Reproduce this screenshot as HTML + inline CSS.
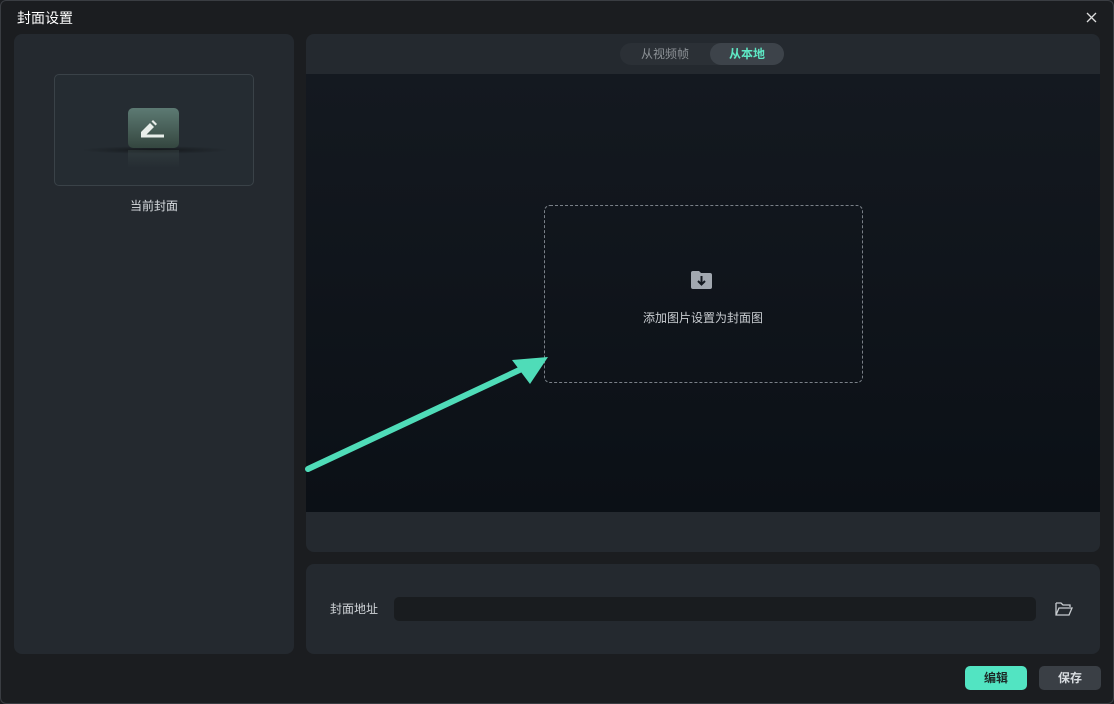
<!DOCTYPE html><html><head><meta charset="utf-8"><style>
*{margin:0;padding:0;box-sizing:border-box}
body{width:1114px;height:704px;background:#1b1d20;font-family:"Liberation Sans","Noto Sans CJK SC",sans-serif;position:relative;overflow:hidden}
.win{position:absolute;left:0;top:0;width:1114px;height:704px;border:1px solid #3a3d42;border-radius:6px;background:#1b1d20}
.a{position:absolute;line-height:1}
</style></head><body><div class="win"></div>
<div class="a" style="left:17px;top:11px;color:#fff;font-size:14px">封面设置</div>
<svg class="a" style="left:1086px;top:12px" width="11" height="11"><path d="M1 1 L10 10 M10 1 L1 10" stroke="#ddd" stroke-width="1.3"/></svg>
<div class="a" style="left:14px;top:34px;width:280px;height:620px;background:#24292f;border-radius:8px"></div>
<div class="a" style="left:54px;top:74px;width:200px;height:112px;background:#252c32;border:1px solid #3a4248;border-radius:5px"></div>
<div class="a" style="left:80px;top:146px;width:150px;height:8px;background:radial-gradient(ellipse,rgba(0,0,0,.45),transparent 70%)"></div>
<div class="a" style="left:128px;top:108px;width:51px;height:40px;border-radius:5px;background:linear-gradient(#5d7a73,#34463f)"></div>
<svg class="a" style="left:128px;top:108px" width="51" height="40"><path d="M13 24 L22 15 L26 19 L17 28 L13 28Z M23.5 13.5 L25 12 L29 16 L27.5 17.5Z" fill="#e8eeea"/><rect x="13" y="26.5" width="23" height="3" fill="#e8eeea"/></svg>
<div class="a" style="left:128px;top:150px;width:51px;height:18px;background:linear-gradient(rgba(80,100,95,.25),transparent)"></div>
<div class="a" style="left:130px;top:200px;color:#d8dce0;font-size:12px">当前封面</div>
<div class="a" style="left:306px;top:34px;width:794px;height:518px;background:#24292f;border-radius:8px;overflow:hidden"><div class="a" style="left:0;top:40px;width:794px;height:438px;background:linear-gradient(#141920,#0b1016)"></div></div>
<div class="a" style="left:620px;top:43px;width:164px;height:22px;background:#2b3036;border-radius:11px"></div>
<div class="a" style="left:710px;top:43px;width:74px;height:22px;background:#3d434a;border-radius:11px"></div>
<div class="a" style="left:641px;top:48px;color:#8c9196;font-size:12px">从视频帧</div>
<div class="a" style="left:729px;top:48px;color:#5ee8c4;font-size:12px;font-weight:bold">从本地</div>
<div class="a" style="left:544px;top:205px;width:319px;height:178px;border:1px dashed #7a8088;border-radius:6px"></div>
<svg class="a" style="left:690px;top:269px" width="24" height="22"><path d="M1 4 Q1 2 3 2 L9 2 L11 4 L20 4 Q22 4 22 6 L22 18 Q22 20 20 20 L3 20 Q1 20 1 18Z" fill="#a2a8b0"/><path d="M11.5 7 V15 M8 12 L11.5 15.5 L15 12" stroke="#141920" stroke-width="2" fill="none"/></svg>
<div class="a" style="left:643px;top:312px;color:#c8ccd0;font-size:12px">添加图片设置为封面图</div>
<svg class="a" style="left:300px;top:350px" width="260" height="130"><line x1="8" y1="119" x2="228" y2="16" stroke="#4fdcb8" stroke-width="6" stroke-linecap="round"/><path d="M248 7 L212 10 L230 34Z" fill="#4fdcb8"/></svg>
<div class="a" style="left:306px;top:564px;width:794px;height:90px;background:#24292f;border-radius:8px"></div>
<div class="a" style="left:330px;top:603px;color:#d0d4d8;font-size:12px">封面地址</div>
<div class="a" style="left:394px;top:597px;width:642px;height:24px;background:#191c1f;border-radius:5px"></div>
<svg class="a" style="left:1055px;top:601px" width="18" height="16"><path d="M1 2 H6 L8 4 H15 V6 M1 2 V14 H14 L17 7 H4 L1 14" stroke="#c8ccd0" stroke-width="1.3" fill="none"/></svg>
<div class="a" style="left:965px;top:666px;width:62px;height:24px;background:#52e4c2;border-radius:5px;color:#1d2a28;font-size:12px;font-weight:bold;text-align:center;line-height:24px">编辑</div>
<div class="a" style="left:1039px;top:666px;width:62px;height:24px;background:#3a3f45;border-radius:5px;color:#d8dce0;font-size:12px;font-weight:bold;text-align:center;line-height:24px">保存</div>
</body></html>
